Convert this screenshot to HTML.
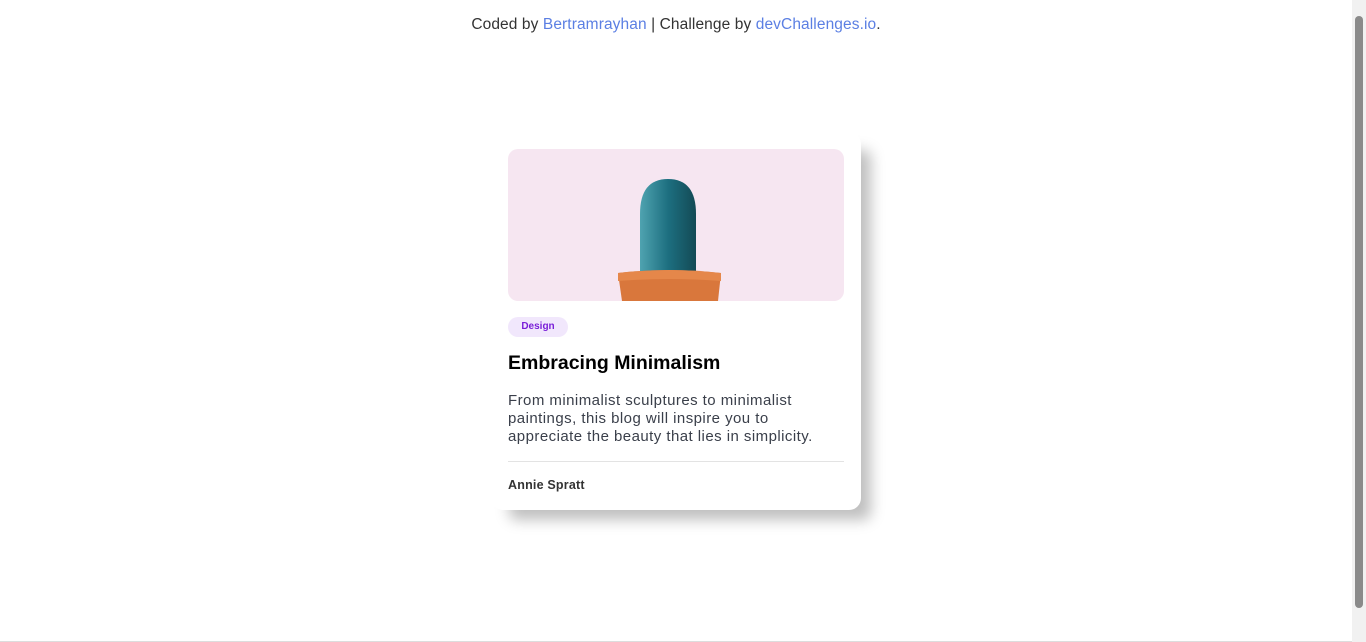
<!DOCTYPE html>
<html><head><style>
html,body{margin:0;padding:0;background:#fff;}
body{width:1366px;height:642px;overflow:hidden;position:relative;font-family:"Liberation Sans",sans-serif;}
.top{position:absolute;top:16px;left:0;width:1352px;text-align:center;font-size:15.5px;letter-spacing:0.1px;color:#333;}
.top a{color:#5b7fe3;text-decoration:none;}
.card{position:absolute;left:491px;top:132px;width:370px;height:378px;background:#fff;border-radius:12px;box-shadow:14px 14px 14px -4px rgba(0,0,0,0.25);}
.img{position:absolute;left:17px;top:17px;width:336px;height:152px;background:#f6e6f1;border-radius:10px;overflow:hidden;}
.tag{position:absolute;left:17px;top:185px;width:60px;height:20px;border-radius:10px;background:#f1e7fc;color:#7a1fd8;font-size:10px;font-weight:bold;text-align:center;line-height:20px;}
h1{position:absolute;left:17px;top:220px;margin:0;font-size:19.5px;font-weight:bold;color:#000;}
p{position:absolute;left:17px;top:260px;margin:0;width:345px;font-size:15px;letter-spacing:0.45px;line-height:18px;color:#3a3f4a;white-space:nowrap;}
.hr{position:absolute;left:17px;top:329px;width:336px;height:1px;background:#e3e3e3;}
.au{position:absolute;left:17px;top:346px;font-size:12.5px;font-weight:bold;color:#333;letter-spacing:0.2px;}
.sb{position:absolute;right:0;top:0;width:14px;height:642px;background:#f1f1f1;}
.sb div{position:absolute;left:3px;top:16px;width:8px;height:592px;background:#8a8a8a;border-radius:4px;}
.bl{position:absolute;left:0;bottom:0;width:1352px;height:1px;background:#ddd;}
</style></head><body>
<div class="top">Coded by <a>Bertramrayhan</a> | Challenge by <a>devChallenges.io</a>.</div>
<div class="card">
<div class="img">
<svg width="336" height="152" viewBox="0 0 336 152">
<defs><linearGradient id="g" x1="0" x2="1"><stop offset="0" stop-color="#4fa3b0"/><stop offset=".5" stop-color="#1d6f80"/><stop offset="1" stop-color="#134a55"/></linearGradient></defs>
<path d="M132 132 L132 65 Q132 30 160 30 Q188 30 188 65 L188 132 Z" fill="url(#g)"/>
<path d="M110 124 Q161 118 213 124 L210 152 L114 152 Z" fill="#d9773c"/>
<path d="M110 124 Q161 118 213 124 L213 132 Q161 128 110 132 Z" fill="#e5874a"/>
</svg>
</div>
<div class="tag">Design</div>
<h1>Embracing Minimalism</h1>
<p>From minimalist sculptures to minimalist<br>paintings, this blog will inspire you to<br>appreciate the beauty that lies in simplicity.</p>
<div class="hr"></div>
<div class="au">Annie Spratt</div>
</div>
<div class="sb"><div></div></div>
<div class="bl"></div>
</body></html>
